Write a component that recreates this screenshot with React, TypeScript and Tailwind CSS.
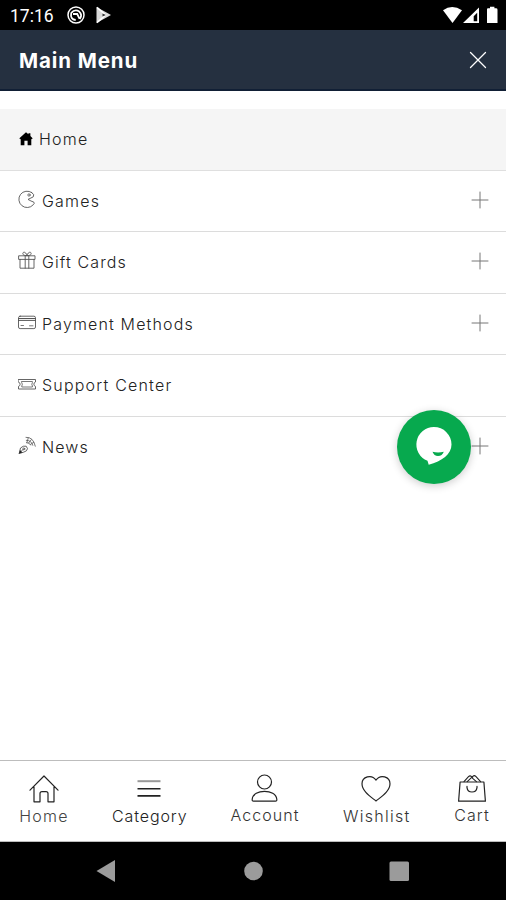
import type { ReactNode } from "react";

type SvgProps = { className?: string; box: string; children: ReactNode };

function Line({ className = "", box, children }: SvgProps) {
  return (
    <svg viewBox={box} className={`shrink-0 ${className}`} fill="none" stroke="currentColor" strokeLinecap="round" strokeLinejoin="round">
      {children}
    </svg>
  );
}

const SolidHome = () => (
  <svg viewBox="0 0 14 14" className="ml-px mr-1.5 h-[14px] w-[14px] shrink-0 fill-black">
    <path d="M7 .2 9.4 2.3V1.2h2v2.9L13.6 6.2 12.9 7.2 12.3 6.8V13.2H8.6V8.7H5.4v4.5H1.7V6.8l-.6.4L.4 6.2Z" />
  </svg>
);

const Games = () => (
  <Line box="0 0 18 18" className="-mt-px mr-1.5 h-[18px] w-[18px]">
    <path strokeWidth=".9" d="M13.8 2.6A8.2 8.2 0 1 0 15.2 14.8Q16.9 13.6 15.8 12.1Q13 11.2 10 9.4L15.2 6.9Q17.2 4.6 13.8 2.6Z" />
    <circle cx="11" cy="5" r="1.2" strokeWidth=".8" />
  </Line>
);

const Gift = () => (
  <Line box="0 0 18 18" className="-mt-0.5 mr-1.5 h-[18px] w-[18px]">
    <path strokeWidth=".9" d="M1 4.8H17V8.4H1ZM2 8.4V17.2H16V8.4M7.2 4.8V17.2M10.8 4.8V17.2M9 4.6C5.8 4.8 4.4 3.5 4.9 2C5.9.1 8.5 1.7 9 4.6ZM9 4.6C12.2 4.8 13.6 3.5 13.1 2C12.1.1 9.5 1.7 9 4.6Z" />
  </Line>
);

const Card = () => (
  <Line box="0 0 18 18" className="-mt-px mr-1.5 h-[18px] w-[18px]">
    <rect x=".5" y="3.2" width="17" height="12.4" rx="1.6" strokeWidth=".9" />
    <path strokeWidth="1" d="M.5 5.5H17.5M.5 7.4H17.5" />
    <path strokeWidth=".8" d="M3 12.5H5.5M11.5 12.8H15" />
  </Line>
);

const Ticket = () => (
  <Line box="0 0 18 18" className="-mt-px mr-1.5 h-[18px] w-[18px]">
    <path strokeWidth=".9" d="M.5 4.5H17.5V7A2.3 2.3 0 0 0 17.5 11.4V14H.5V11.4A2.3 2.3 0 0 0 .5 7Z" />
    <path strokeWidth=".8" d="M3.8 6.5H14.4V7.6A3 3 0 0 0 14.4 11V12H3.8V11A3 3 0 0 0 3.8 7.6Z" />
  </Line>
);

const News = () => (
  <Line box="0 0 18 18" className="-mt-0.5 mr-1.5 h-[18px] w-[18px]">
    <path strokeWidth=".9" d="M1.3 17.2 2.5 12Q5.2 9.4 8.2 10.2L9.5 12.6Q9.1 15.4 6.2 16ZM1.3 17.2 5.5 13" />
    <circle cx="5.8" cy="12.9" r="1" strokeWidth=".8" />
    <path d="M1 17.4 2 13.9 4.4 16.5Z" fill="#222" stroke="none" />
    <path strokeWidth=".8" d="M8 1.3Q15.3.7 17.3 10.2M8.3 4.3Q13.2 4 14.8 9.3M8.4 6.6Q11.4 6.2 12.6 9M10.2 2.2 9 6.3M13.3 3.7 10.6 7M15.7 6.3 12.5 8.4" />
  </Line>
);

const Plus = () => (
  <Line box="0 0 18 18" className="ml-auto h-[18px] w-[18px] text-[#777]">
    <path d="M9 1V17M1 9H17" strokeWidth="1" />
  </Line>
);

const menu = [
  { label: "Games", icon: <Games />, plus: true, text: "tracking-[1.2px]" },
  { label: "Gift Cards", icon: <Gift />, plus: true, text: "tracking-[1.1px]" },
  { label: "Payment Methods", icon: <Card />, plus: true, text: "tracking-[1.15px]" },
  { label: "Support Center", icon: <Ticket />, plus: false, text: "tracking-[1.2px]" },
  { label: "News", icon: <News />, plus: true, text: "tracking-[1.1px]" },
];

const HomeLine = () => (
  <Line box="0 0 30 28" className="h-7 w-[30px]">
    <path strokeWidth="1.2" d="M1 15.2 15 1 29 15.2M5 12V26.8H11V18.5Q11 16.6 13 16.6H17Q19 16.6 19 18.5V26.8H25V12" />
  </Line>
);

const Bars = () => (
  <Line box="0 0 30 28" className="h-7 w-[30px]">
    <path strokeWidth="2" stroke="#999" strokeLinecap="butt" d="M3.5 6.2H26.5" />
    <path strokeWidth="1.6" strokeLinecap="butt" d="M3.5 13.8H26.5M3.5 20.9H26.5" />
  </Line>
);

const Person = () => (
  <Line box="0 0 30 28" className="h-7 w-[30px]">
    <circle cx="14.5" cy="8" r="7" strokeWidth="1.2" />
    <path strokeWidth="1.2" d="M3.5 27.2Q2 27.2 2.2 25.3C3.1 14.6 25.9 14.6 26.8 25.3Q27 27.2 25.5 27.2Z" />
  </Line>
);

const Heart = () => (
  <Line box="0 0 30 28" className="-ml-0.5 h-7 w-[30px]">
    <path strokeWidth="1.2" d="M15 26C9.8 21.8 1 16.3 1 8.8C1 1.6 10.6-1.1 15 5.1C19.4-1.1 29 1.6 29 8.8C29 16.3 20.2 21.8 15 26Z" />
  </Line>
);

const Bag = () => (
  <Line box="0 0 30 28" className="h-7 w-[30px]">
    <path strokeWidth="1.2" d="M3.1 8H26.9L28.4 27.2H1.6ZM10 12.4V13.6Q10.6 18 15 18Q19.4 18 20 13.6V12.4" />
    <path strokeWidth="1.1" d="M7 7.6 11.5 2.6Q13 1.2 14.6 2.6L15.8 4M10.2 7.6 15.8 2.4Q17.3 1 18.8 2.4L23.6 7.6M15.4 4.2 19.4 7.6" />
  </Line>
);

const tabs = [
  { label: "Home", icon: <HomeLine />, box: "w-[49px]", text: "tracking-[1.2px] -mr-px text-[#444]" },
  { label: "Category", icon: <Bars />, box: "w-[75px]", text: "tracking-[0.9px] -mr-px text-[#222]" },
  { label: "Account", icon: <Person />, box: "w-[69px] -mt-px", text: "tracking-[1.05px] text-[#333]" },
  { label: "Wishlist", icon: <Heart />, box: "w-[67px]", text: "tracking-[1.25px] text-[#333]" },
  { label: "Cart", icon: <Bag />, box: "w-[35px] -mt-px", text: "tracking-[1.1px] -mr-px text-[#333]" },
];

function StatusBar() {
  return (
    <div className="flex h-[30px] items-center bg-black pl-[10px] pr-[8px] text-white">
      <span className="w-[46px] pt-[3px] font-['Roboto'] text-[17.5px] leading-none">17:16</span>
      <svg viewBox="0 0 20 20" className="ml-[10px] h-5 w-5" fill="none" stroke="white">
        <circle cx="10" cy="10" r="8" strokeWidth="1.5" />
        <path strokeWidth="1.8" d="M5 8.2Q9 3.6 13.2 6.6Q16.8 10 13.8 14M5.2 8.2Q4 14.2 9.7 15M7 9H11.2L13.6 13.8" />
      </svg>
      <svg viewBox="0 0 18 18" className="ml-[9px] h-[18px] w-[18px]">
        <path d="M1.5 1 16 9 1.5 17Z" fill="#d9d9d9" />
        <path d="M2 1.4 10.5 9 2 16.6" stroke="#fff" strokeWidth="1.5" fill="none" />
        <path d="M7.5 7.4 11 9 7.5 10.5Z" fill="#333" />
      </svg>
      <svg viewBox="0 0 56 18" className="ml-auto h-[18px] w-14" fill="white">
        <path d="M1 4.2Q10-2.4 20 4.2L10.5 17Z" />
        <path fillRule="evenodd" d="M21 17 37 1.4V17ZM31.7 15.2H35.2V6.7L31.7 10.3Z" />
        <path d="M45 3.2Q45 2.3 46 2.3H48V.7H52.4V2.3H54Q55.5 2.3 55.5 3.7V17H45Z" />
      </svg>
    </div>
  );
}

export default function App() {
  return (
    <div className="relative flex h-[900px] w-[506px] flex-col overflow-hidden bg-white font-['Inter','Liberation_Sans',sans-serif] text-[#222]">
      <StatusBar />
      <header className="flex h-[61px] items-center border-b-2 border-[#111f35] bg-[#253040] pl-[19px] pr-[19px] text-white">
        <h1 className="pt-[3px] text-[20.5px] font-bold tracking-[0.9px]">Main Menu</h1>
        <Line box="0 0 18 18" className="ml-auto h-[18px] w-[18px]">
          <path strokeWidth="1.3" d="M1.5 1.5 16.5 16.5M16.5 1.5 1.5 16.5" />
        </Line>
      </header>
      <main className="min-h-0 flex-1 pt-[18px]">
        <div className="flex h-[61.5px] items-center border-b border-[#dfdfdf] bg-[#f5f5f5] px-[18px] pb-px">
          <SolidHome />
          <span className="text-base font-light tracking-[1.2px]">Home</span>
        </div>
        {menu.map((item) => (
          <div key={item.label} className="flex h-[61.5px] items-center border-b border-[#dcdcdc] pl-[18px] pr-[17px] pb-[2.5px] text-[#555] last:border-b-0">
            {item.icon}
            <span className={`whitespace-nowrap pt-0.5 text-base font-light text-[#222] ${item.text}`}>{item.label}</span>
            {item.plus && <Plus />}
          </div>
        ))}
      </main>
      <button aria-label="Chat" className="absolute left-[397px] top-[410px] h-[74px] w-[74px] rounded-full bg-[#07a94e] shadow-[0_2px_8px_rgba(0,0,0,0.2)]">
        <svg viewBox="0 0 74 74" className="h-full w-full">
          <path fill="white" d="M37 17A17.5 17.5 0 0 0 30.5 50.8L31.7 54.8C45 51 54.5 44.5 54.5 34.5A17.5 17.5 0 0 0 37 17Z" />
          <path fill="#07a94e" d="M35.5 41.8Q41 43 46.8 41.8Q45.3 46 41 46Q37 46 35.5 41.8Z" />
        </svg>
      </button>
      <nav className="flex h-[82px] items-start justify-between border-y border-[#bdbdbd] pl-[19px] pr-[17px] pt-[14px]">
        {tabs.map((tab) => (
          <div key={tab.label} className={`flex flex-col items-center ${tab.box}`}>
            {tab.icon}
            <span className={`mt-[3px] whitespace-nowrap text-base leading-5 font-light ${tab.text}`}>{tab.label}</span>
          </div>
        ))}
      </nav>
      <footer className="h-[58px] bg-black">
        <svg viewBox="0 0 506 58" className="h-full w-full" fill="#9b9b9b">
          <path d="M96.5 29 115 18V40Z" />
          <circle cx="253.5" cy="29" r="9.3" />
          <rect x="389.5" y="19.5" width="19.5" height="19.5" rx="1.5" />
        </svg>
      </footer>
    </div>
  );
}
